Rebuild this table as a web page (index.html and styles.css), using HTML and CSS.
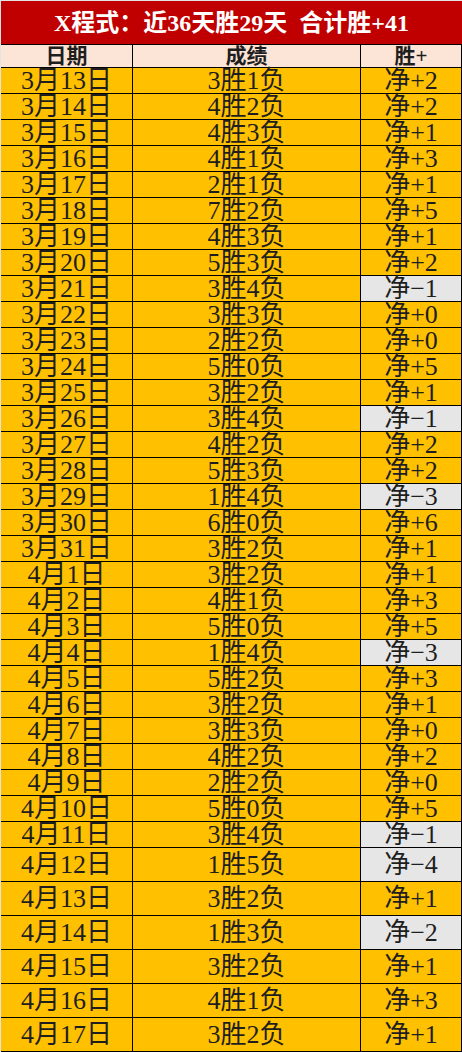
FILE: index.html
```html
<!DOCTYPE html>
<html lang="zh">
<head>
<meta charset="utf-8">
<link rel="stylesheet" href="styles.css">
</head>
<body>
<div class="sheet">
  <div class="title">X程式：近36天胜29天&nbsp;&nbsp;合计胜+41</div>
  <div class="grid">
    <div class="th">日期</div><div class="th">成绩</div><div class="th">胜+</div>
    <div class="td">3月13日</div><div class="td">3胜1负</div><div class="td">净+2</div>
    <div class="td">3月14日</div><div class="td">4胜2负</div><div class="td">净+2</div>
    <div class="td">3月15日</div><div class="td">4胜3负</div><div class="td">净+1</div>
    <div class="td">3月16日</div><div class="td">4胜1负</div><div class="td">净+3</div>
    <div class="td">3月17日</div><div class="td">2胜1负</div><div class="td">净+1</div>
    <div class="td">3月18日</div><div class="td">7胜2负</div><div class="td">净+5</div>
    <div class="td">3月19日</div><div class="td">4胜3负</div><div class="td">净+1</div>
    <div class="td">3月20日</div><div class="td">5胜3负</div><div class="td">净+2</div>
    <div class="td">3月21日</div><div class="td">3胜4负</div><div class="td neg">净−1</div>
    <div class="td">3月22日</div><div class="td">3胜3负</div><div class="td">净+0</div>
    <div class="td">3月23日</div><div class="td">2胜2负</div><div class="td">净+0</div>
    <div class="td">3月24日</div><div class="td">5胜0负</div><div class="td">净+5</div>
    <div class="td">3月25日</div><div class="td">3胜2负</div><div class="td">净+1</div>
    <div class="td">3月26日</div><div class="td">3胜4负</div><div class="td neg">净−1</div>
    <div class="td">3月27日</div><div class="td">4胜2负</div><div class="td">净+2</div>
    <div class="td">3月28日</div><div class="td">5胜3负</div><div class="td">净+2</div>
    <div class="td">3月29日</div><div class="td">1胜4负</div><div class="td neg">净−3</div>
    <div class="td">3月30日</div><div class="td">6胜0负</div><div class="td">净+6</div>
    <div class="td">3月31日</div><div class="td">3胜2负</div><div class="td">净+1</div>
    <div class="td">4月1日</div><div class="td">3胜2负</div><div class="td">净+1</div>
    <div class="td">4月2日</div><div class="td">4胜1负</div><div class="td">净+3</div>
    <div class="td">4月3日</div><div class="td">5胜0负</div><div class="td">净+5</div>
    <div class="td">4月4日</div><div class="td">1胜4负</div><div class="td neg">净−3</div>
    <div class="td">4月5日</div><div class="td">5胜2负</div><div class="td">净+3</div>
    <div class="td">4月6日</div><div class="td">3胜2负</div><div class="td">净+1</div>
    <div class="td">4月7日</div><div class="td">3胜3负</div><div class="td">净+0</div>
    <div class="td">4月8日</div><div class="td">4胜2负</div><div class="td">净+2</div>
    <div class="td">4月9日</div><div class="td">2胜2负</div><div class="td">净+0</div>
    <div class="td">4月10日</div><div class="td">5胜0负</div><div class="td">净+5</div>
    <div class="td">4月11日</div><div class="td">3胜4负</div><div class="td neg">净−1</div>
    <div class="td tall">4月12日</div><div class="td tall">1胜5负</div><div class="td tall neg">净−4</div>
    <div class="td tall">4月13日</div><div class="td tall">3胜2负</div><div class="td tall">净+1</div>
    <div class="td tall">4月14日</div><div class="td tall">1胜3负</div><div class="td tall neg">净−2</div>
    <div class="td tall">4月15日</div><div class="td tall">3胜2负</div><div class="td tall">净+1</div>
    <div class="td tall">4月16日</div><div class="td tall">4胜1负</div><div class="td tall">净+3</div>
    <div class="td tall">4月17日</div><div class="td tall">3胜2负</div><div class="td tall">净+1</div>
  </div>
</div>
</body>
</html>
```
FILE: styles.css
```css
html, body {
  margin: 0;
  padding: 0;
  background: #e3e3e3;
}
body {
  font-family: "Liberation Serif", "Noto Sans CJK SC", serif;
  color: #1e1e1e;
}
.sheet {
  width: 461px;
  margin: 1px 0 0 1px;
  background: #c00000;
}
.title {
  height: 43px;
  line-height: 44px;
  background: #c00000;
  color: #ffffff;
  font-weight: bold;
  font-size: 24px;
  text-align: center;
  white-space: nowrap;
}
.grid {
  display: grid;
  grid-template-columns: 131px 227px 100px;
  gap: 1px;
  background: #000;
  border-top: 1px solid #000;
  border-right: 1px solid #000;
  border-bottom: 1px solid #000;
}
.th {
  height: 22px;
  line-height: 22px;
  background: #fce4d6;
  font-weight: bold;
  font-size: 21px;
  text-align: center;
  overflow: visible;
}
.td {
  height: 25px;
  line-height: 25px;
  background: #ffc000;
  font-size: 26px;
  text-align: center;
  white-space: nowrap;
}
.td.tall {
  height: 33px;
  line-height: 33px;
}
.td.neg {
  background: #e7e6e6;
}
```
